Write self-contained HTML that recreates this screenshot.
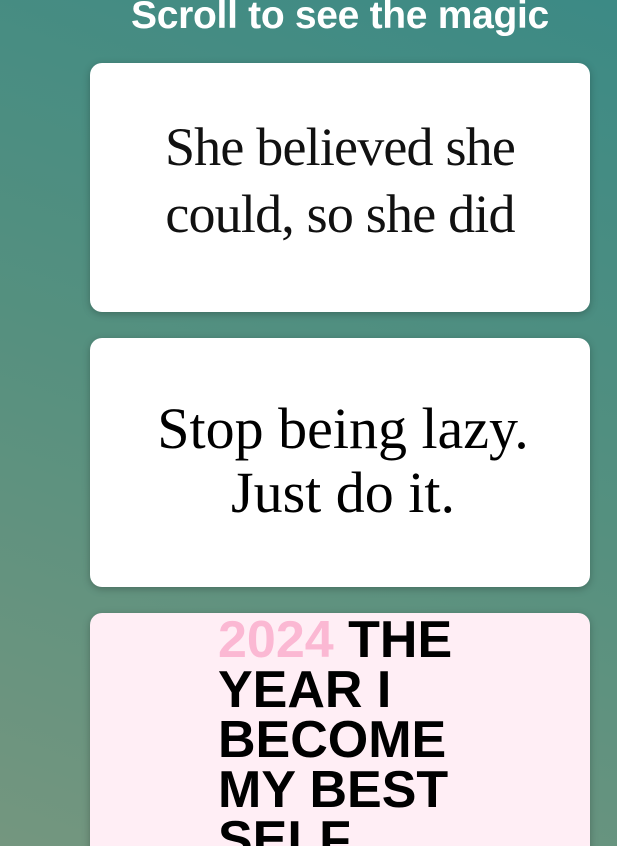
<!DOCTYPE html>
<html><head><style>
html,body{margin:0;padding:0;width:617px;height:846px;overflow:hidden}
body{background:linear-gradient(200deg,#3c8a85 0%,#55907f 50%,#74967f 100%);position:relative;font-family:"Liberation Sans",sans-serif}
.t{position:absolute;left:0;width:680px;text-align:center;top:-9px;color:#fff;font-weight:bold;font-size:39px;letter-spacing:-0.3px;line-height:50px}
.c{position:absolute;left:90px;width:500px;height:249px;background:#fff;border-radius:12px;box-shadow:0 2px 8px rgba(0,0,0,.25);overflow:hidden}
.q1{position:absolute;left:0;width:500px;text-align:center;top:51px;font-family:"Liberation Serif",serif;font-size:54px;line-height:67px;color:#111;letter-spacing:-0.8px}
.q2{position:absolute;left:3px;width:500px;text-align:center;top:59px;font-family:"Liberation Serif",serif;font-size:58px;line-height:64px;color:#000}
.q3{position:absolute;left:128px;top:2px;font-weight:bold;font-size:52px;line-height:50px;color:#000;letter-spacing:0px}
</style></head><body>
<div class="t">Scroll to see the magic</div>
<div class="c" style="top:63px"><div class="q1">She believed she<br>could, so she did</div></div>
<div class="c" style="top:338px"><div class="q2">Stop being lazy.<br>Just do it.</div></div>
<div class="c" style="top:613px;height:260px;background:#ffeef5"><div class="q3"><span style="color:#fbb8d3">2024</span> THE<br>YEAR I<br>BECOME<br>MY BEST<br>SELF</div></div>
</body></html>
